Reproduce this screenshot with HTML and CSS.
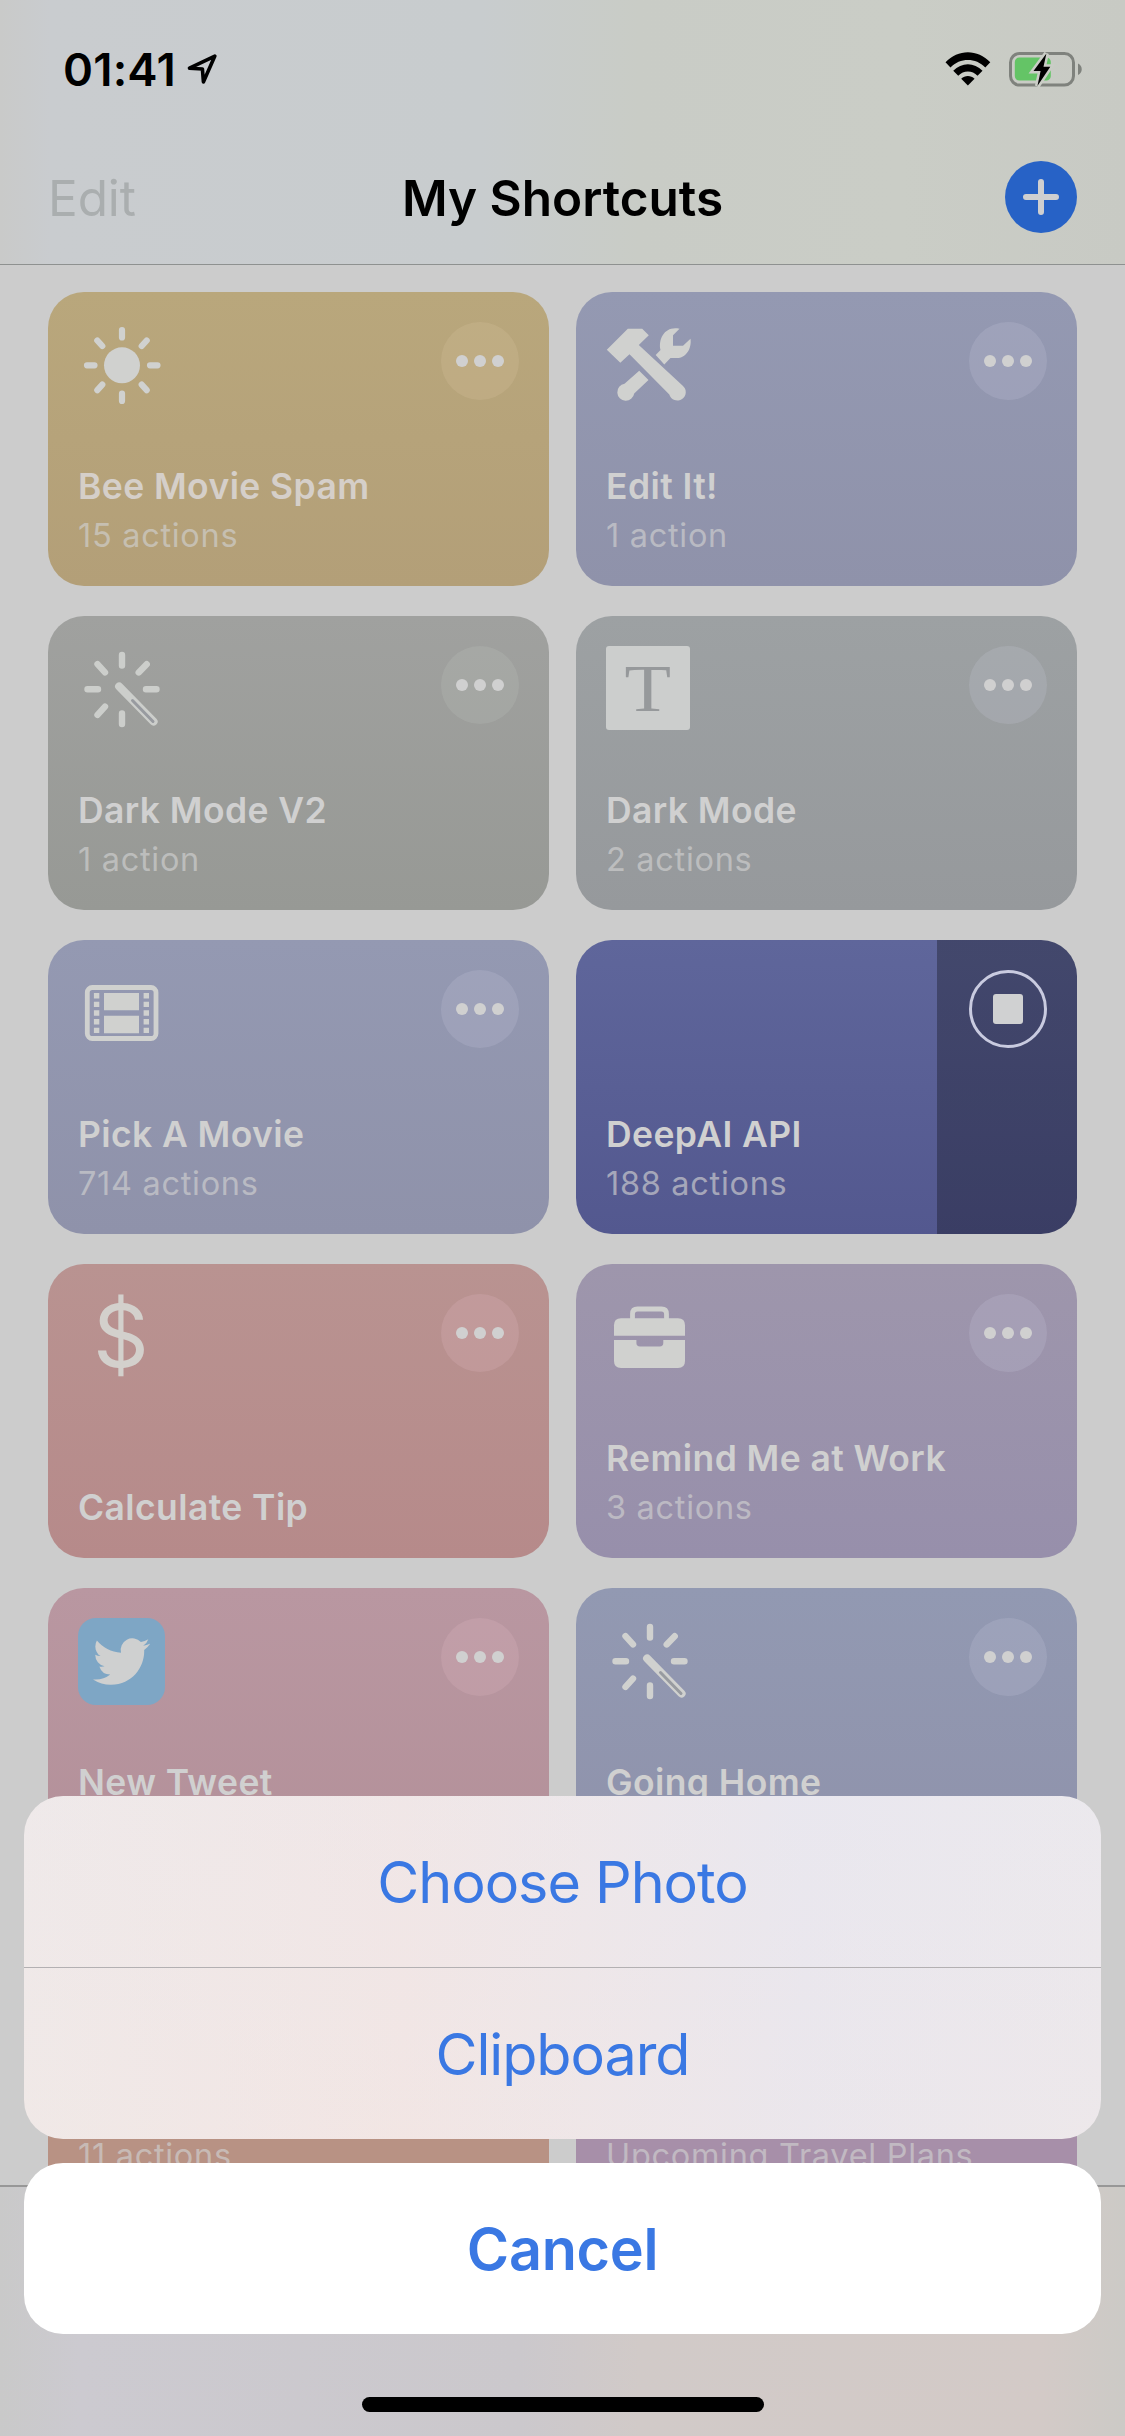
FILE: index.html
```html
<!DOCTYPE html>
<html lang="en">
<head>
    <meta charset="UTF-8">
    <title>My Shortcuts</title>
    <link rel="stylesheet" href="styles.css">
</head>
<body>
    <!-- shared icons -->
    <svg class="defs" width="0" height="0">
        <symbol id="wand" viewBox="0 0 84 84">
            <g stroke="currentColor" stroke-width="6.4" stroke-linecap="round">
                <path d="M44 9v10.500M44 67.500V78M9.500 43.300H20M68 43.300h10.500M19.500 18.200l7.500 8.200M68.700 18.200l-8 8.200M19.500 68.800l7.500-8.200"/>
            </g>
            <path d="M41.200 40.500L75.500 75.500" stroke="currentColor" stroke-width="8.200" stroke-linecap="round"/>
            <path class="wand-slot" d="M54.500 54.500L75 75.500" stroke-width="3" stroke-linecap="round"/>
        </symbol>
    </svg>

    <div class="phone">
        <div class="header">
            <div class="status-bar">
                <span class="time">01:41</span>
                <svg class="location" width="32" height="34" viewBox="0 0 32 34"><path d="M29 4L3.500 16.200L16.500 17L17.500 30Z" fill="none" stroke="#000" stroke-width="3.600" stroke-linejoin="round"/></svg>
                <svg class="wifi" width="46" height="34" viewBox="0 0 46 34">
                    <path d="M0.500 10.300C13-3.200 33-3.200 45.500 10.300L40.500 15.500C31 5.500 15 5.500 5.500 15.500Z"/>
                    <path d="M8.300 18.800C16.500 10 29.500 10 37.700 18.800L32.700 23.800C27.500 18 18.500 18 13.300 23.800Z"/>
                    <path d="M16.300 26.800C20 23 26 23 29.700 26.800L23 33.600Z"/>
                </svg>
                <svg class="battery" width="76" height="38" viewBox="0 0 76 38">
                    <rect x="2.500" y="3.500" width="63" height="31.500" rx="9" fill="none" stroke="#7f827d" stroke-width="3"/>
                    <path d="M70 13.500c5 2.200 5 9.300 0 11.500z" fill="#7f827d"/>
                    <rect x="6.800" y="7.500" width="36" height="23" rx="4.500" fill="#64c466"/>
                    <path class="bolt" d="M38.400 3.500L25.500 21H32.600L29.400 36L42.300 16.800H35.500Z"/>
                </svg>
            </div>
            <div class="nav-bar">
                <span class="edit">Edit</span>
                <h1>My Shortcuts</h1>
                <button class="add" type="button">
                    <svg width="72" height="72" viewBox="0 0 72 72"><path d="M36 21v30M21 36h30" stroke="#cfcfd0" stroke-width="6" stroke-linecap="round"/></svg>
                </button>
            </div>
        </div>

        <div class="shortcuts">
            <div class="card yellow">
                <div class="card-top">
                    <svg class="icon" viewBox="0 0 84 84">
                        <circle cx="44" cy="43.300" r="18"/>
                        <path d="M44 8v7.500M44 71.500V79M9 43.300h7.500M72 43.300h7.500M19.300 18.500l5 5.500M68.700 18.500l-5 5.500M19.300 68.100l5-5.500M68.700 68.100l-5-5.500" stroke="currentColor" stroke-width="6.200" stroke-linecap="round"/>
                    </svg>
                    <div class="more"><i></i><i></i><i></i></div>
                </div>
                <h2>Bee Movie Spam</h2>
                <p>15 actions</p>
            </div>

            <div class="card indigo">
                <div class="card-top">
                    <svg class="icon" viewBox="0 0 84 84">
                        <path d="M21.800 6.700H36.200L42.800 13.300L32.800 23L76.500 63.500A8.400 8.400 0 1 1 63.300 72.500L23.500 32.300L14.300 40.700L0.800 27.700Z"/>
                        <path d="M73.500 6.700L67 13.300V23.700H77L84.500 16.700C86 27 79.500 36 71 36H64.500L58.300 42.500L49.700 33L54.500 28C52 16 59.500 3.500 73.500 6.700Z"/>
                        <path d="M33.200 48.700L42.500 58L28.200 71.500A8.500 8.500 0 1 1 18.500 61.800Z"/>
                    </svg>
                    <div class="more"><i></i><i></i><i></i></div>
                </div>
                <h2>Edit It!</h2>
                <p>1 action</p>
            </div>

            <div class="card gray">
                <div class="card-top">
                    <svg class="icon"><use href="#wand"/></svg>
                    <div class="more"><i></i><i></i><i></i></div>
                </div>
                <h2>Dark Mode V2</h2>
                <p>1 action</p>
            </div>

            <div class="card slate">
                <div class="card-top">
                    <div class="letter"><span>T</span></div>
                    <div class="more"><i></i><i></i><i></i></div>
                </div>
                <h2>Dark Mode</h2>
                <p>2 actions</p>
            </div>

            <div class="card indigo">
                <div class="card-top">
                    <svg class="icon" viewBox="0 0 84 84">
                        <rect x="9.300" y="17.500" width="68.700" height="51" rx="5" fill="none" stroke="currentColor" stroke-width="4.800"/>
                        <path d="M26 23h35v17.300H26zM26 45.700h35v17.600H26z"/>
                        <path d="M18.600 23V64M68.300 23V64" stroke="currentColor" stroke-width="5.400" stroke-dasharray="5.400 3.260"/>
                    </svg>
                    <div class="more"><i></i><i></i><i></i></div>
                </div>
                <h2>Pick A Movie</h2>
                <p>714 actions</p>
            </div>

            <div class="card running">
                <div class="card-top">
                    <div class="stop"><i></i></div>
                </div>
                <h2>DeepAI API</h2>
                <p>188 actions</p>
            </div>

            <div class="card red">
                <div class="card-top">
                    <div class="dollar">$</div>
                    <div class="more"><i></i><i></i><i></i></div>
                </div>
                <h2>Calculate Tip</h2>
            </div>

            <div class="card purple">
                <div class="card-top">
                    <svg class="icon" viewBox="0 0 84 84">
                        <path d="M26.500 25V20Q26.500 15 31.500 15H55.500Q60.500 15 60.500 20V25" fill="none" stroke="currentColor" stroke-width="4.800"/>
                        <path d="M15 24.200H72Q79 24.200 79 31.200V41.700H8V31.200Q8 24.200 15 24.200Z"/>
                        <path d="M8 46H30.400V49Q30.400 52.400 34 52.400H53.700Q57.300 52.400 57.300 49V46H79V67Q79 74 72 74H15Q8 74 8 67Z"/>
                    </svg>
                    <div class="more"><i></i><i></i><i></i></div>
                </div>
                <h2>Remind Me at Work</h2>
                <p>3 actions</p>
            </div>

            <div class="card pink">
                <div class="card-top">
                    <div class="twitter">
                        <svg width="57" height="57" viewBox="0 0 24 24"><path d="M23.953 4.570a10 10 0 01-2.825.775 4.958 4.958 0 002.163-2.723c-.951.555-2.005.959-3.127 1.184a4.920 4.920 0 00-8.384 4.482C7.690 8.095 4.067 6.130 1.640 3.162a4.822 4.822 0 00-.666 2.475c0 1.710.870 3.213 2.188 4.096a4.904 4.904 0 01-2.228-.616v.060a4.923 4.923 0 003.946 4.827 4.996 4.996 0 01-2.212.085 4.936 4.936 0 004.604 3.417 9.867 9.867 0 01-6.102 2.105c-.390 0-.779-.023-1.170-.067a13.995 13.995 0 007.557 2.209c9.053 0 13.998-7.496 13.998-13.985 0-.210 0-.420-.015-.630A9.935 9.935 0 0024 4.590z" fill="#cfd0d0"/></svg>
                    </div>
                    <div class="more"><i></i><i></i><i></i></div>
                </div>
                <h2>New Tweet</h2>
                <p>&nbsp;</p>
            </div>

            <div class="card blue">
                <div class="card-top">
                    <svg class="icon"><use href="#wand"/></svg>
                    <div class="more"><i></i><i></i><i></i></div>
                </div>
                <h2>Going Home</h2>
                <p>&nbsp;</p>
            </div>

            <div class="card orange">
                <p>11 actions</p>
            </div>

            <div class="card violet">
                <p>Upcoming Travel Plans</p>
            </div>
        </div>

        <div class="tab-bar"></div>

        <div class="action-sheet">
            <div class="options">
                <button type="button">Choose Photo</button>
                <button type="button">Clipboard</button>
            </div>
            <button class="cancel" type="button">Cancel</button>
            <div class="home-indicator"></div>
        </div>
    </div>
</body>
</html>
```

FILE: styles.css
```css
* {
    box-sizing: border-box;
}
body {
    margin: 0;
    font-family: Inter, "Liberation Sans", sans-serif;
    background-color: #cccccc;
}
h1, h2, p {
    margin: 0;
}
button {
    border: none;
    padding: 0;
    font-family: inherit;
}
.defs {
    position: absolute;
}
.phone {
    position: relative;
    display: flex;
    flex-direction: column;
    width: 1125px;
    height: 2436px;
    overflow: hidden;
    background-color: #cccccc;
}

/* header */
.header {
    height: 265px;
    flex: none;
    background: linear-gradient(90deg, #c9cac9 0, #c9cccf 50px, #c8ccce 480px, #c9ccc6 640px, #cacdc6 900px, #c8cac4 100%);
    border-bottom: 1px solid #8e9190;
}
.status-bar {
    display: flex;
    align-items: center;
    height: 138px;
    padding: 0 41px 0 63px;
}
.time {
    width: 124px;
    font-size: 45.500px;
    font-weight: 600;
    letter-spacing: 0.2px;
}
.wifi {
    margin-left: 727px;
}
.battery {
    margin-left: 17px;
    flex: none;
}
.bolt {
    stroke: #cacdc6;
    stroke-width: 5px;
    paint-order: stroke;
}
.nav-bar {
    display: flex;
    align-items: center;
    height: 118px;
    padding: 0 48px;
}
.edit {
    width: 72px;
    font-size: 49.500px;
    color: #aaaeaf;
    letter-spacing: -0.1px;
    padding-top: 1px;
}
.nav-bar h1 {
    flex: 1;
    font-size: 49.500px;
    font-weight: 600;
    text-align: center;
    padding-top: 1px;
}
.add {
    width: 72px;
    height: 72px;
    border-radius: 50%;
    background-color: #2762c6;
}

/* shortcut cards */
.shortcuts {
    display: grid;
    grid-template-columns: 501px 501px;
    grid-auto-rows: 294px;
    gap: 30px 27px;
    flex: 1;
    padding: 27px 48px 0;
    overflow: hidden;
}
.card {
    display: flex;
    flex-direction: column;
    justify-content: flex-end;
    padding: 30px 30px 28px;
    border-radius: 36px;
}
.card-top {
    display: flex;
    justify-content: space-between;
    margin-bottom: auto;
    height: 84px;
}
.card h2 {
    font-size: 35.500px;
    line-height: 44px;
    font-weight: 600;
    letter-spacing: 0.4px;
    color: #d0d0d0;
    white-space: nowrap;
}
.card p {
    margin-top: 5px;
    font-size: 32.500px;
    line-height: 44px;
    letter-spacing: 0.7px;
    color: #d0d0d0;
    opacity: 0.65;
    white-space: nowrap;
}
.icon {
    width: 84px;
    height: 84px;
    color: #d0d1cf;
    fill: currentColor;
    overflow: visible;
}
.more {
    display: flex;
    align-items: center;
    justify-content: center;
    gap: 6px;
    width: 78px;
    height: 78px;
    border-radius: 50%;
    background-color: rgba(220, 220, 240, 0.15);
}
.more i {
    width: 12px;
    height: 12px;
    border-radius: 50%;
    background-color: #d0d0d0;
}
.yellow {
    background: linear-gradient(#b9a77c, #b39f78);
}
.yellow .more {
    background-color: rgba(225, 205, 170, 0.18);
}
.yellow h2 {
    color: #d5cfc9;
}
.indigo {
    background: linear-gradient(#9499b2, #8f92aa);
}
.gray {
    background: linear-gradient(#a0a19f, #979995);
}
.gray .more {
    background-color: rgba(220, 224, 220, 0.13);
}
.gray .icon {
    color: #cccecb;
}
.wand-slot {
    stroke: #989ba0;
}
.slate {
    background: linear-gradient(#9da1a3, #96999c);
}
.running {
    background: linear-gradient(90deg, transparent 361px, rgba(0, 0, 0, 0.3) 361px), linear-gradient(#5f669b, #53588f);
}
.red {
    background: linear-gradient(#b99391, #b68a8a);
}
.red .more,
.pink .more {
    background-color: rgba(230, 190, 200, 0.2);
}
.purple {
    background: linear-gradient(#9e96ac, #978fab);
}
.pink {
    background: linear-gradient(#b997a1, #b39099);
}
.blue {
    background: linear-gradient(#9299b2, #8f92ab);
}
.orange {
    background-color: #b89284;
}
.violet {
    background-color: #a78fa9;
}
.letter {
    display: flex;
    align-items: center;
    justify-content: center;
    width: 84px;
    height: 84px;
    border-radius: 3px;
    background-color: #cccecd;
    color: #96999b;
    font-family: "Liberation Serif", serif;
    font-size: 68px;
    line-height: 84px;
}
.letter span {
    transform: scaleX(1.12);
}
.dollar {
    width: 84px;
    padding-left: 2px;
    text-align: center;
    font-size: 87px;
    font-weight: 400;
    line-height: 84px;
    color: #d3d0cc;
}
.twitter {
    display: flex;
    align-items: center;
    justify-content: center;
    width: 87px;
    height: 87px;
    border-radius: 18px;
    background-color: #7ea6c5;
}
.stop {
    display: flex;
    align-items: center;
    justify-content: center;
    width: 78px;
    height: 78px;
    margin-left: auto;
    border: 3px solid #c9cbe0;
    border-radius: 50%;
}
.stop i {
    width: 30px;
    height: 30px;
    border-radius: 3px;
    background-color: #d0d1d2;
}

.tab-bar {
    height: 251px;
    flex: none;
    border-top: 2px solid #979797;
    background: linear-gradient(90deg, #c9c9c9 0, #cccad0 80px, #cbc8cc 520px, #d1cac8 640px, #d3cac7 1040px, #cccac6 100%);
}

/* action sheet over the list */
.action-sheet {
    position: absolute;
    left: 24px;
    right: 24px;
    bottom: 24px;
}
.action-sheet button {
    display: block;
    width: 100%;
    height: 171px;
    font-size: 57.500px;
    letter-spacing: -1.050px;
    color: #3a78e3;
    background: none;
}
.options {
    border-radius: 39px;
    margin-bottom: 24px;
    overflow: hidden;
    background: linear-gradient(180deg, rgba(236, 232, 236, 0.3), rgba(241, 229, 226, 0.3)), linear-gradient(90deg, #f0eae9 0, #f2e6e5 380px, #eee7ea 560px, #e8e7f0 780px, #ebe9ee 100%);
}
.options button + button {
    height: 172px;
    border-top: 1px solid #b3b0b2;
}
.action-sheet .cancel {
    border-radius: 39px;
    background-color: #fff;
    font-weight: 600;
    letter-spacing: -0.300px;
}
.home-indicator {
    width: 402px;
    height: 15px;
    margin: 63px auto 0;
    border-radius: 8px;
    background-color: #000;
}
```
